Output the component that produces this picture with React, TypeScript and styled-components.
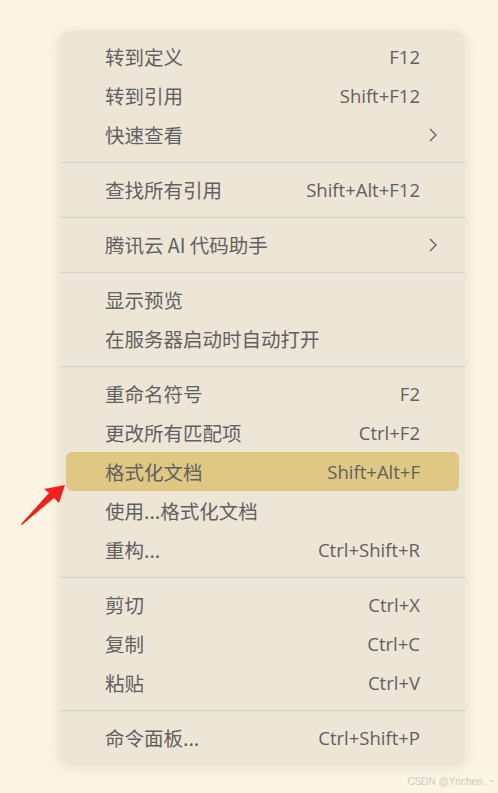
import styled, { createGlobalStyle } from 'styled-components';

const GlobalStyle = createGlobalStyle`
    html, body {
        margin: 0;
        padding: 0;
        background: #fcf5e4;
    }
    body {
        font-family: "Noto Sans", "Noto Sans CJK SC", sans-serif;
    }
`;

const Page = styled.div`
    position: relative;
    width: 498px;
    height: 793px;
    padding: 31px 0 0 60px;
    box-sizing: border-box;
    overflow: hidden;
`;

const Menu = styled.div`
    width: 405px;
    padding: 6px 0 6px;
    background: #ede6d6;
    border-radius: 9px;
    box-shadow: 0 3px 14px rgba(120, 100, 60, 0.18);
`;

const Item = styled.div<{ $active?: boolean }>`
    display: flex;
    align-items: center;
    justify-content: space-between;
    height: 39px;
    margin: 0 6px;
    padding: 0 39px 0 39px;
    border-radius: 6px;
    background: ${(p) => (p.$active ? '#dfc883' : 'transparent')};
    color: #616161;
`;

const Label = styled.span`
    font-family: "Noto Sans CJK SC", sans-serif;
    font-size: 19.5px;
    letter-spacing: 0;
`;

const Shortcut = styled.span`
    font-family: "Open Sans", "Noto Sans", sans-serif;
    font-size: 18.5px;
`;

const Chevron = styled.svg`
    width: 10px;
    height: 16px;
    margin-right: -18px;
`;

const Separator = styled.div`
    height: 1px;
    margin: 8px 0 7px;
    background: #d3d2d2;
`;

const Watermark = styled.div`
    position: absolute;
    right: 4px;
    bottom: 6px;
    font-family: "Liberation Sans", sans-serif;
    font-size: 10px;
    color: #cfcac0;
`;

const Arrow = styled.svg`
    position: absolute;
    left: 18px;
    top: 480px;
`;

type Entry = { label: string; key?: string; sub?: boolean; active?: boolean } | 'sep';

const entries: Entry[] = [
    { label: '转到定义', key: 'F12' },
    { label: '转到引用', key: 'Shift+F12' },
    { label: '快速查看', sub: true },
    'sep',
    { label: '查找所有引用', key: 'Shift+Alt+F12' },
    'sep',
    { label: '腾讯云 AI 代码助手', sub: true },
    'sep',
    { label: '显示预览' },
    { label: '在服务器启动时自动打开' },
    'sep',
    { label: '重命名符号', key: 'F2' },
    { label: '更改所有匹配项', key: 'Ctrl+F2' },
    { label: '格式化文档', key: 'Shift+Alt+F', active: true },
    { label: '使用...格式化文档' },
    { label: '重构...', key: 'Ctrl+Shift+R' },
    'sep',
    { label: '剪切', key: 'Ctrl+X' },
    { label: '复制', key: 'Ctrl+C' },
    { label: '粘贴', key: 'Ctrl+V' },
    'sep',
    { label: '命令面板...', key: 'Ctrl+Shift+P' },
];

function App() {
    return (
        <Page>
            <GlobalStyle />
            <Menu>
                {entries.map((entry, i) =>
                    entry === 'sep' ? (
                        <Separator key={i} />
                    ) : (
                        <Item key={i} $active={entry.active}>
                            <Label>{entry.label}</Label>
                            {entry.key && <Shortcut>{entry.key}</Shortcut>}
                            {entry.sub && (
                                <Chevron viewBox="0 0 10 16">
                                    <path d="M2 2 L8 8 L2 14" fill="none" stroke="#616161" strokeWidth="1.3" />
                                </Chevron>
                            )}
                        </Item>
                    )
                )}
            </Menu>
            <Arrow width="52" height="50" viewBox="0 0 52 50">
                <path d="M47 5 L41 23 L36 18 L4 45 L3 44 L31 13 L26 9 Z" fill="#f4201c" />
            </Arrow>
            <Watermark>CSDN @Ynchen. ~</Watermark>
        </Page>
    );
}

export default App;
